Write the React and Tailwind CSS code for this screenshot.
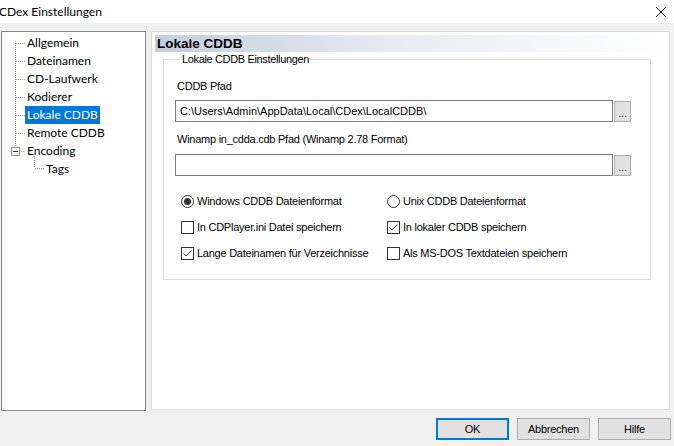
import React from "react";

const UI = { fontFamily: '"Liberation Sans", Arial, sans-serif', letterSpacing: "-0.25px" };
const TREEF = { fontFamily: 'Lato, "Noto Sans", sans-serif', letterSpacing: "0px" };

function TreeLines() {
  return (
    <svg
      className="absolute left-0 top-0 pointer-events-none"
      width="60"
      height="160"
      shapeRendering="crispEdges"
    >
      <g stroke="#a0a0a0" strokeWidth="1" strokeDasharray="1 1" fill="none">
        <line x1="13.5" y1="11" x2="13.5" y2="115" />
        {[11, 29, 47, 65, 83, 101].map((y) => (
          <line key={y} x1="14" y1={y + 0.5} x2="23" y2={y + 0.5} />
        ))}
        <line x1="19" y1="119.5" x2="23" y2="119.5" />
        <line x1="32.5" y1="124" x2="32.5" y2="136" />
        <line x1="33" y1="136.5" x2="42" y2="136.5" />
      </g>
      <rect x="9.5" y="115.5" width="8" height="8" fill="white" stroke="#919191" />
      <line x1="11" y1="119.5" x2="16" y2="119.5" stroke="#333" />
    </svg>
  );
}

function TreeItem({ label, selected, indent }) {
  return (
    <div className="h-[18px] flex items-center" style={{ paddingLeft: indent ? 42 : 23 }}>
      <span
        className={
          "px-[2px] h-[18px] leading-[18px] text-[12px] " +
          (selected ? "bg-[#0078d7] text-white" : "text-black")
        }
      >
        {label}
      </span>
    </div>
  );
}

function Radio({ checked, label }) {
  return (
    <div className="flex items-center h-[13px]">
      <span className="w-[13px] h-[13px] rounded-full border border-[#333] bg-white flex items-center justify-center shrink-0">
        {checked && <span className="w-[7px] h-[7px] rounded-full bg-[#333]" />}
      </span>
      <span className="ml-[3px] text-[11px] leading-[13px] text-black whitespace-nowrap">{label}</span>
    </div>
  );
}

function Check({ checked, label }) {
  return (
    <div className="flex items-center h-[13px]">
      <span className="w-[13px] h-[13px] border border-[#333] bg-white flex items-center justify-center shrink-0">
        {checked && (
          <svg width="11" height="11" viewBox="0 0 11 11">
            <path d="M1.5 5.5 L4 8 L9.5 2.5" stroke="#333" strokeWidth="1" fill="none" />
          </svg>
        )}
      </span>
      <span className="ml-[3px] text-[11px] leading-[13px] text-black whitespace-nowrap">{label}</span>
    </div>
  );
}

function PathInput({ value }) {
  return (
    <div className="flex items-start">
      <div className="w-[438px] h-[22px] border border-[#7a7a7a] bg-white flex items-center pl-[4px] text-[11px] tracking-[0px] text-black whitespace-nowrap overflow-hidden">
        {value}
      </div>
      <div className="ml-[1px] mt-[1px] w-[17px] h-[21px] border border-[#adadad] bg-[#e1e1e1] flex items-end justify-center pb-[4px] text-[11px] leading-[8px] text-[#4b1f7a]">
        ...
      </div>
    </div>
  );
}

function Btn({ label, def }) {
  return (
    <div
      className={
        "w-[73px] h-[22px] bg-[#e1e1e1] flex items-center justify-center text-[11px] text-black " +
        (def ? "border-2 border-[#0078d7]" : "border border-[#adadad]")
      }
    >
      {label}
    </div>
  );
}

export default function App() {
  return (
    <div className="w-[674px] h-[446px] bg-[#f0f0f0] flex flex-col overflow-hidden" style={UI}>
      <div className="h-[23px] bg-white flex items-center justify-between shrink-0">
        <span className="text-[12px] text-black -ml-[1px]" style={TREEF}>
          CDex Einstellungen
        </span>
        <svg width="10" height="10" viewBox="0 0 10 10" className="mr-[8px]">
          <path d="M0 0 L10 10 M10 0 L0 10" stroke="#111" strokeWidth="1" />
        </svg>
      </div>

      <div className="flex mt-[8px] pl-[1px] shrink-0">
        <div className="w-[145px] h-[380px] border border-[#828790] bg-white relative" style={TREEF}>
          <TreeLines />
          <div className="pt-[2px] flex flex-col">
            <TreeItem label="Allgemein" />
            <TreeItem label="Dateinamen" />
            <TreeItem label="CD-Laufwerk" />
            <TreeItem label="Kodierer" />
            <TreeItem label="Lokale CDDB" selected />
            <TreeItem label="Remote CDDB" />
            <TreeItem label="Encoding" />
            <TreeItem label="Tags" indent />
          </div>
        </div>

        <div className="ml-[5px] w-[519px] h-[379px] border border-[#dadada] bg-white flex flex-col">
          <div className="mt-[3px] ml-[3px] mr-[1px] h-[17px] bg-gradient-to-r from-[#c3cedd] via-[#e9edf3] to-white flex items-center pl-[2px]">
            <span className="text-[13.5px] font-bold text-black leading-[17px] tracking-[0px]">Lokale CDDB</span>
          </div>

          <fieldset className="ml-[11px] mt-[1px] w-[488px] border border-[#dcdcdc] pl-[11px] pb-[19px]">
            <legend className="ml-[5px] px-[2px] text-[11px] leading-[12px] tracking-[-0.35px] text-black">
              Lokale CDDB Einstellungen
            </legend>
            <div className="pt-[15px] flex flex-col">
              <div className="ml-[2px] h-[13px] text-[11px] leading-[13px] text-black">CDDB Pfad</div>
              <div className="mt-[7px]">
                <PathInput value="C:\Users\Admin\AppData\Local\CDex\LocalCDDB\" />
              </div>
              <div className="mt-[11px] ml-[2px] h-[13px] text-[11px] leading-[13px] text-black">
                Winamp in_cdda.cdb Pfad (Winamp 2.78 Format)
              </div>
              <div className="mt-[8px]">
                <PathInput value="" />
              </div>
              <div className="ml-[6px] mt-[19px] grid grid-cols-[206px_1fr] gap-y-[13px]">
                <Radio checked label="Windows CDDB Dateienformat" />
                <Radio label="Unix CDDB Dateienformat" />
                <Check label="In CDPlayer.ini Datei speichern" />
                <Check checked label="In lokaler CDDB speichern" />
                <Check checked label="Lange Dateinamen für Verzeichnisse" />
                <Check label="Als MS-DOS Textdateien speichern" />
              </div>
            </div>
          </fieldset>
        </div>
      </div>

      <div className="flex justify-end gap-[8px] mt-[7px] pr-[3px]">
        <Btn label="OK" def />
        <Btn label="Abbrechen" />
        <Btn label="Hilfe" />
      </div>
    </div>
  );
}
